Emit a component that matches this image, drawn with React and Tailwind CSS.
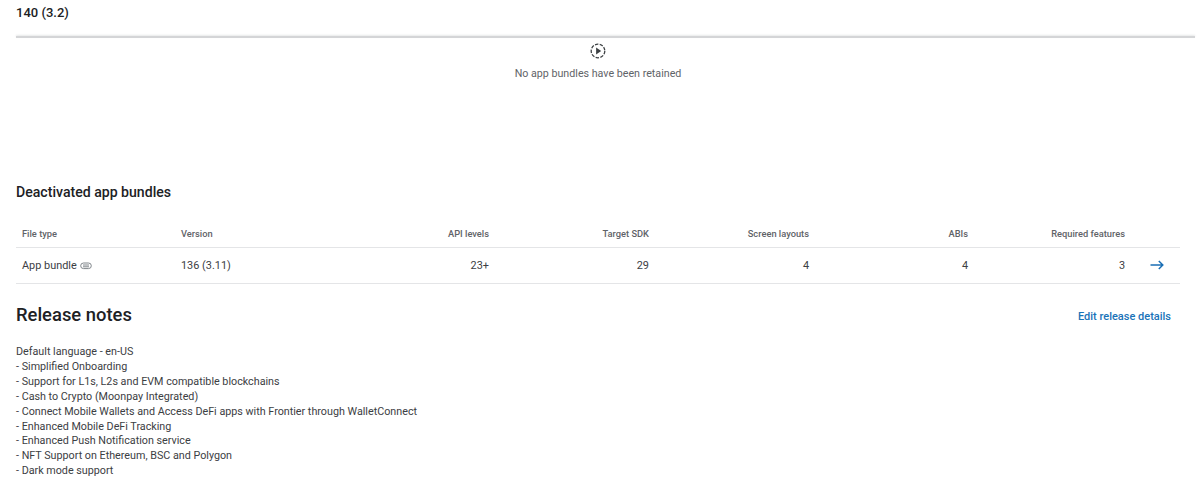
const cols = 'grid grid-cols-[160px_160px_160px_160px_160px_160px_160px_44px] items-center';

const notes = [
  'Default language - en-US',
  '- Simplified Onboarding',
  '- Support for L1s, L2s and EVM compatible blockchains',
  '- Cash to Crypto (Moonpay Integrated)',
  '- Connect Mobile Wallets and Access DeFi apps with Frontier through WalletConnect',
  '- Enhanced Mobile DeFi Tracking',
  '- Enhanced Push Notification service',
  '- NFT Support on Ethereum, BSC and Polygon',
  '- Dark mode support',
];

function RetainedIcon() {
  return (
    <svg width="16" height="16" viewBox="0 0 16 16" fill="none">
      <circle cx="8" cy="8" r="6.8" stroke="#3c4043" strokeWidth="1.3" strokeDasharray="3.4 1.4" />
      <path d="M6.1 4.6 11.2 8l-5.1 3.4z" fill="#3c4043" />
    </svg>
  );
}

function BundleIcon() {
  return (
    <svg width="12" height="8" viewBox="0 0 12 8" fill="none" stroke="#80868b" strokeWidth="1">
      <rect x="0.7" y="1" width="10.6" height="5.6" rx="2.8" />
      <path d="M3 3h6M3 4.8h6" />
    </svg>
  );
}

export default function App() {
  return (
    <div className="w-[1200px] h-[487px] overflow-hidden bg-white font-['Roboto',sans-serif] text-[#3c4043]">
      <div className="h-[36px] pl-4 pt-[5px]">
        <h2 className="text-[13px] leading-[16px] font-medium text-[#202124]">140 (3.2)</h2>
      </div>

      <div className="ml-4 mr-[5px] h-[2px] bg-[#d4d5d7] shadow-[0_-1px_2px_rgba(60,64,67,0.12)]" />

      <div className="h-[135px] flex flex-col items-center pt-[5px] pr-[4px]">
        <RetainedIcon />
        <p className="mt-[8px] text-[10.7px] leading-[14px] text-[#5f6368]">No app bundles have been retained</p>
      </div>

      <div className="pl-4 pr-5">
        <h3 className="h-[47px] text-[14.1px] leading-[18px] font-medium text-[#202124] pt-[10px]">Deactivated app bundles</h3>

        <div className={`${cols} h-[28px] text-[9.3px] font-medium text-[#5f6368] border-b border-[#e4e5e7]`}>
          <div className="pl-[6px]">File type</div>
          <div className="pl-[5px]">Version</div>
          <div className="text-right pr-[7px]">API levels</div>
          <div className="text-right pr-[7px]">Target SDK</div>
          <div className="text-right pr-[7px]">Screen layouts</div>
          <div className="text-right pr-[8px]">ABIs</div>
          <div className="text-right pr-[11px]">Required features</div>
          <div />
        </div>

        <div className={`${cols} h-[36px] pt-[1px] text-[10.9px] text-[#3c4043] border-b border-[#e4e5e7]`}>
          <div className="pl-[6px] flex items-center gap-[3px]">App bundle <BundleIcon /></div>
          <div className="pl-[5px]">136 (3.11)</div>
          <div className="text-right pr-[7px]">23+</div>
          <div className="text-right pr-[7px]">29</div>
          <div className="text-right pr-[7px]">4</div>
          <div className="text-right pr-[8px]">4</div>
          <div className="text-right pr-[11px]">3</div>
          <div className="pl-[14px] flex items-center pb-[2px]">
            <svg width="14" height="10" viewBox="0 0 14 10" fill="none" stroke="#1a6fb5" strokeWidth="1.5">
              <path d="M0.5 5h12M8.8 1l4 4-4 4" />
            </svg>
          </div>
        </div>

        <div className="flex items-start justify-between h-[61px] pt-[19px] pr-[9px]">
          <h3 className="text-[18.4px] leading-[23px] font-medium text-[#202124]">Release notes</h3>
          <a className="mt-[7px] text-[11px] leading-[14px] font-medium text-[#1a73b8]">Edit release details</a>
        </div>

        <div className="text-[10.75px] leading-[14.9px] text-[#3c4043]">
          {notes.map((line) => (
            <div key={line}>{line}</div>
          ))}
        </div>
      </div>
    </div>
  );
}
